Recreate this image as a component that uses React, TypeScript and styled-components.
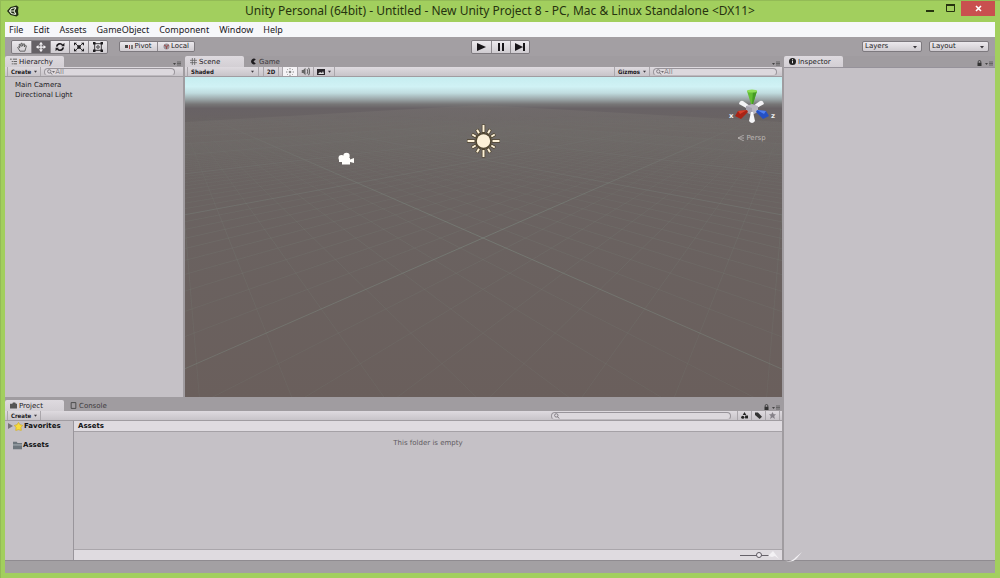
import React from "react";
import styled, { createGlobalStyle } from "styled-components";

const ui = '"DejaVu Sans", Verdana, sans-serif';
const uiNarrow = '"DejaVu Sans Condensed", "DejaVu Sans", Verdana, sans-serif';
const sys = '"Noto Sans", "Segoe UI", sans-serif';

const Global = createGlobalStyle`
  * { box-sizing: border-box; }
  body { margin: 0; font-family: ${ui}; font-size: 7px; line-height: 10px; color: #1c1a1d; }
  button, select, input { font: inherit; color: inherit; margin: 0; padding: 0; border: 0; border-radius: 0; background: none; }
  h1, h2, p, ul { margin: 0; padding: 0; font: inherit; list-style: none; }
  svg { display: block; flex: none; }
`;

const Frame = styled.div`
  position: relative;
  min-height: 100vh;
  display: flex;
  flex-direction: column;
  background: #a2cf5e;
  border: solid #93bb56;
  border-width: 1px 0 0 1px;
  padding: 0 5px 5px 4px;
`;
const TitleBar = styled.header`
  display: grid;
  grid-template-columns: 1fr auto 1fr;
  height: 21px;
  flex: none;
`;
const Logo = styled.div`
  padding: 4px 2px;
`;
const Title = styled.h1`
  font-family: ${sys};
  font-size: 12px;
  line-height: 20px;
  color: #26330f;
  white-space: nowrap;
`;
const WindowControls = styled.div`
  display: flex;
  justify-content: flex-end;
  align-items: flex-start;
`;
const WindowButton = styled.button<{ $close?: boolean }>`
  width: ${(p) => (p.$close ? "34px" : "20px")};
  height: ${(p) => (p.$close ? "15px" : "14px")};
  display: grid;
  place-items: center;
  background: ${(p) => (p.$close ? "#c9504f" : "transparent")};
`;
const MenuBar = styled.nav`
  display: flex;
  gap: 10px;
  height: 15px;
  flex: none;
  padding: 0 4px;
  background: #f6f7fa;
`;
const MenuItem = styled.button`
  font-family: ${sys};
  font-size: 9px;
  line-height: 14px;
`;
const MainToolbar = styled.div`
  display: grid;
  grid-template-columns: 1fr auto 1fr;
  align-items: center;
  height: 19px;
  flex: none;
  padding: 0 6px;
  background: #a39fa3;
`;
const ToolGroups = styled.div<{ $end?: boolean }>`
  display: flex;
  align-items: center;
  gap: ${(p) => (p.$end ? "7px" : "11px")};
  justify-content: ${(p) => (p.$end ? "flex-end" : "flex-start")};
`;
const ButtonGroup = styled.div`
  display: flex;
  border: 1px solid #7d797e;
  border-radius: 2px;
  overflow: hidden;
`;
const ToolButton = styled.button<{ $active?: boolean; $wide?: boolean }>`
  width: ${(p) => (p.$wide ? "37px" : "19px")};
  height: ${(p) => (p.$wide ? "9px" : "12px")};
  display: flex;
  align-items: center;
  justify-content: center;
  gap: 1px;
  line-height: 9px;
  background: ${(p) => (p.$active ? "#656166" : "linear-gradient(#ece9ed, #cfcbd0)")};
  & + & { border-left: 1px solid #8d898e; }
`;
const SelectBox = styled.label<{ $flat?: boolean }>`
  display: flex;
  align-items: center;
  width: ${(p) => (p.$flat ? "72px" : "60px")};
  height: ${(p) => (p.$flat ? "9px" : "11px")};
  padding: 0 4px 0 ${(p) => (p.$flat ? "3px" : "2px")};
  border: solid #7d797e;
  border-width: ${(p) => (p.$flat ? "0 1px" : "1px")};
  border-color: ${(p) => (p.$flat ? "#aaa6ab" : "#7d797e")};
  border-radius: ${(p) => (p.$flat ? "0" : "2px")};
  background: ${(p) => (p.$flat ? "none" : "linear-gradient(#ece9ed, #cfcbd0)")};
  select {
    appearance: none;
    flex: 1;
    min-width: 0;
    height: 9px;
    line-height: 9px;
    font-family: ${(p) => (p.$flat ? uiNarrow : ui)};
    font-size: ${(p) => (p.$flat ? "6px" : "7px")};
    font-weight: ${(p) => (p.$flat ? 700 : 400)};
  }
`;
const Workspace = styled.main`
  flex: 1;
  display: flex;
  gap: 2px;
  background: #a09ca0;
`;
const EditorColumn = styled.div`
  flex: 1;
  min-width: 0;
  display: flex;
  flex-direction: column;
  gap: 3px;
`;
const UpperRow = styled.div`
  flex: 1;
  display: flex;
  gap: 2px;
`;
const Panel = styled.section<{ $width?: string; $height?: string }>`
  display: flex;
  flex-direction: column;
  min-width: 0;
  flex: ${(p) => (p.$width ? `0 0 ${p.$width}` : p.$height ? `0 0 ${p.$height}` : "1")};
`;
const TabStrip = styled.div`
  display: flex;
  align-items: flex-end;
  gap: 1px;
  height: 11px;
  flex: none;
`;
const Tab = styled.button<{ $active?: boolean }>`
  display: flex;
  align-items: center;
  gap: 2px;
  width: 59px;
  height: 11px;
  padding: 0 5px;
  color: ${(p) => (p.$active ? "#1c1a1d" : "#3d3a3e")};
  background: ${(p) => (p.$active ? "linear-gradient(#dedadf, #d3cfd4)" : "none")};
  border-radius: 2px 2px 0 0;
`;
const TabTools = styled.div`
  margin-left: auto;
  display: flex;
  align-items: center;
  gap: 3px;
  padding: 0 2px 1px;
`;
const PanelBar = styled.div`
  display: flex;
  align-items: center;
  height: 10px;
  flex: none;
  padding: 0 2px;
  background: linear-gradient(#dedadf, #c8c4c9);
  border-bottom: 1px solid #a09ca1;
`;
const BarButton = styled.button<{ $on?: boolean; $label?: boolean }>`
  display: flex;
  align-items: center;
  justify-content: center;
  gap: 3px;
  min-width: ${(p) => (p.$label ? "32px" : "13px")};
  height: 9px;
  padding: 0 3px;
  font-family: ${uiNarrow};
  font-size: 6px;
  line-height: 9px;
  font-weight: 700;
  background: ${(p) => (p.$on ? "#f5f3f6" : "none")};
  border: solid #aaa6ab;
  border-width: 0 1px;
  & + & { border-left: 0; }
`;
const Spacer = styled.div<{ $w?: string }>`
  flex: ${(p) => (p.$w ? `0 0 ${p.$w}` : "1")};
`;
const Search = styled.label<{ $width?: string }>`
  display: flex;
  align-items: center;
  flex: ${(p) => (p.$width ? `0 0 ${p.$width}` : "1")};
  height: 8px;
  margin: 0 3px;
  padding: 0 2px;
  border: 1px solid #98949a;
  border-bottom-color: #bdb9be;
  border-radius: 4px;
  background: #dcd8dd;
  input { flex: 1; min-width: 0; width: 0; height: 6px; line-height: 6px; outline: 0; }
  input::placeholder { color: #868288; opacity: 1; }
`;
const PanelBody = styled.div<{ $line?: boolean }>`
  flex: 1;
  background: #c5c1c6;
  border-top: ${(p) => (p.$line ? "1px solid #96929a" : "0")};
`;
const ObjectList = styled.ul`
  padding: 3px 10px;
`;
const Viewport = styled.div`
  flex: 1;
  position: relative;
  overflow: hidden;
  background: #6a625f;
`;
const SceneCanvas = styled.svg`
  position: absolute;
  inset: 0;
  width: 100%;
  height: 100%;
`;
const AxisGizmo = styled.div`
  position: absolute;
  top: 7px;
  right: 3px;
  width: 54px;
  display: flex;
  flex-direction: column;
  align-items: center;
  gap: 7px;
`;
const PerspButton = styled.button`
  display: flex;
  align-items: center;
  gap: 2px;
  color: #bdb8b6;
`;
const ProjectBody = styled.div`
  flex: 1;
  display: flex;
  background: #c5c1c6;
`;
const ProjectTree = styled.ul`
  width: 69px;
  flex: none;
  border-right: 1px solid #99959b;
  display: flex;
  flex-direction: column;
  gap: 9px;
`;
const TreeItem = styled.li`
  display: flex;
  align-items: center;
  gap: 1px;
  height: 10px;
  padding-left: 3px;
  font-weight: 700;
  color: #111;
`;
const FolderView = styled.div`
  flex: 1;
  display: flex;
  flex-direction: column;
`;
const Breadcrumb = styled.h2`
  height: 11px;
  padding: 0 4px;
  font-weight: 700;
  color: #111;
  background: #dfdbe0;
  border-bottom: 1px solid #a5a1a6;
`;
const EmptyNote = styled.p`
  flex: 1;
  padding: 6px;
  text-align: center;
  color: #5f5b61;
`;
const FolderFooter = styled.div`
  display: flex;
  align-items: center;
  justify-content: flex-end;
  height: 11px;
  padding: 0 8px;
  background: #dfdbe0;
  border-top: 1px solid #aaa6ab;
`;
const ZoomSlider = styled.input`
  appearance: none;
  width: 34px;
  height: 8px;
  background: linear-gradient(#66626a, #66626a) center / 100% 1px no-repeat;
  &::-webkit-slider-thumb {
    appearance: none;
    width: 6px;
    height: 6px;
    border: 1px solid #5c5860;
    border-radius: 50%;
    background: #eeeaf0;
  }
`;
const StatusBar = styled.footer`
  height: 13px;
  flex: none;
  background: #a3a0a3;
  border-top: 1px solid #8f8b90;
`;
const Swoosh = styled.svg`
  position: absolute;
  right: 196px;
  bottom: 14px;
  pointer-events: none;
`;

const Caret = ({ size = 4 }: { size?: number }) => (
  <svg width={size} height={size} viewBox="0 0 4 4"><path d="M0 1h4L2 3.5z" fill="#39363b" /></svg>
);
const PanelMenu = () => (
  <svg width="8" height="5" viewBox="0 0 8 5"><path d="M0 2h3L1.500 4z" fill="#444" /><path d="M4 1h4M4 2.500h4M4 4h4" stroke="#555" strokeWidth=".8" /></svg>
);
const Lock = () => (
  <svg width="5" height="6" viewBox="0 0 5 6"><path d="M1.200 3V1.800a1.300 1.300 0 0 1 2.600 0V3" fill="none" stroke="#333" strokeWidth=".8" /><path d="M.5 2.800h4V6h-4z" fill="#333" /></svg>
);
const Lens = ({ menu }: { menu?: boolean }) => (
  <svg width="8" height="6" viewBox="0 0 8 6"><circle cx="2.300" cy="2.400" r="1.700" fill="none" stroke="#706c72" strokeWidth=".8" /><path d="M3.500 3.700l1.600 1.800" stroke="#706c72" />{menu && <path d="M5 2h3L6.500 4z" fill="#706c72" />}</svg>
);
const Icon = ({ children, size = 8 }: { children: React.ReactNode; size?: number }) => (
  <svg width={size} height={size} viewBox="0 0 12 12" fill="none" stroke="#1d1b1e" strokeWidth="1.500">{children}</svg>
);

/* Ground plane seen from a camera pitched 26 degrees and yawed 45 degrees, looking at the origin. */
const F = 277, SIN = 0.4384, COS = 0.8988, H = 4.05, D0 = 8.3, CX = 298, CY = 161;
type Pt = [number, number];
const project = (a: number, b: number): Pt => {
  const d = D0 + (a + b) * 0.7071, l = (a - b) * 0.7071;
  const z = d * COS + H * SIN;
  return [CX + (F * l) / z, CY + (F * (H * COS - d * SIN)) / z];
};
const NEAR = -(D0 * COS + H * SIN - 1) / (0.7071 * COS);
const FAR = 160;
const gridPath = (lines: number[]) =>
  lines.map((k) => {
    const start = Math.max(NEAR - k, -FAR);
    return [[project(k, start), project(k, FAR)], [project(start, k), project(FAR, k)]]
      .map(([p, q]) => `M${p[0].toFixed(1)} ${p[1].toFixed(1)}L${q[0].toFixed(1)} ${q[1].toFixed(1)}`)
      .join("");
  }).join("");
const range = (limit: number, step: number) =>
  Array.from({ length: (2 * limit) / step + 1 }, (_, i) => i * step - limit);
const minor = gridPath(range(40, 1).filter((k) => k % 10 !== 0));
const major = gridPath(range(150, 10).filter((k) => k !== 0));
const axes = gridPath([0]);
const rays = range(150, 30).concat(180);

const Scene = () => (
  <SceneCanvas viewBox="0 0 597 320" preserveAspectRatio="xMidYMid slice" aria-label="Scene">
    <defs>
      <linearGradient id="sky" x1="0" y1="0" x2="0" y2="320" gradientUnits="userSpaceOnUse">
        <stop offset="0" stopColor="#c6edf0" />
        <stop offset=".03" stopColor="#d0f2f5" />
        <stop offset=".05" stopColor="#c0dcdf" />
        <stop offset=".07" stopColor="#9aa5a7" />
        <stop offset=".085" stopColor="#777677" />
        <stop offset=".098" stopColor="#686265" />
        <stop offset=".15" stopColor="#6a6463" />
        <stop offset="1" stopColor="#6a5f5c" />
      </linearGradient>
      <linearGradient id="fade" x1="0" y1="0" x2="0" y2="320" gradientUnits="userSpaceOnUse">
        <stop offset=".12" stopColor="#000" />
        <stop offset=".2" stopColor="#555" />
        <stop offset=".4" stopColor="#ddd" />
        <stop offset=".5" stopColor="#fff" />
        <stop offset="1" stopColor="#aaa" />
      </linearGradient>
      <linearGradient id="haze" x1="0" y1="28" x2="0" y2="110" gradientUnits="userSpaceOnUse">
        <stop offset="0" stopColor="#7b7774" stopOpacity=".4" />
        <stop offset="1" stopColor="#74706c" stopOpacity="0" />
      </linearGradient>
      <mask id="far"><rect width="597" height="320" fill="url(#fade)" /></mask>
    </defs>
    <rect width="597" height="320" fill="url(#sky)" />
    <path d="M0 45L298 28L597 45V110H0z" fill="url(#haze)" />
    <g mask="url(#far)" fill="none">
      <path d={minor} stroke="#788078" strokeOpacity=".24" />
      <path d={major} stroke="#7d8a82" strokeOpacity=".4" />
      <path d={axes} stroke="#7d8a82" strokeOpacity=".55" />
    </g>
    <g fill="#fffefb"><circle cx="156.500" cy="81" r="3" /><circle cx="161.500" cy="79" r="3.200" /><path d="M154 81h11v1.500l4-1.500v5l-4-1v2.500h-8v-2.500h-3z" /></g>
    <g transform="translate(298.500 64)">
      <g stroke="#50452f" strokeWidth="3.500">
        {rays.map((a) => <path key={a} d={a % 90 ? "M0-8V-13.500" : "M0-8V-16.500"} transform={`rotate(${a})`} />)}
      </g>
      <circle r="8" fill="#50452f" />
      <circle r="6.700" fill="#fdf1d8" />
      <g stroke="#fdf1d8" strokeWidth="2">
        {rays.map((a) => <path key={a} d={a % 90 ? "M0-9V-13" : "M0-9V-16"} transform={`rotate(${a})`} />)}
      </g>
    </g>
  </SceneCanvas>
);

const Gizmo = () => (
  <svg width="48" height="42" viewBox="0 0 48 42">
    <path d="M11 20q1-4 4-3l7 5-2 3z" fill="#f3f3f6" /><path d="M36 20q-1-4-4-3l-7 5 2 3z" fill="#f3f3f6" />
    <path d="M18 22l6-2 6 2v6l-6 3-6-3z" fill="#b9b6c1" /><path d="M18 22l6 2v7l-6-3z" fill="#a5a2af" />
    <path d="M19 7h10l-4 13h-2z" fill="#62bd33" /><path d="M25 7h4l-4 13h-1z" fill="#459a25" /><ellipse cx="24" cy="7" rx="5" ry="1.500" fill="#8ede58" />
    <path d="M7 32l3-5 9-1 1 2-7 7z" fill="#a82416" /><path d="M10 27l9-1-7 4z" fill="#d8402c" />
    <path d="M41 32l-3-5-9-1-1 2 7 7z" fill="#2450c4" /><path d="M38 27l-9-1 7 4z" fill="#4f80f2" />
    <path d="M23 28h2l2 9q-3 4-6 0z" fill="#f6f6f8" />
    <g fill="#eee" fontSize="7" fontWeight="700"><text x="1" y="34">x</text><text x="43" y="34">z</text></g>
  </svg>
);

const App = () => (
  <>
    <Global />
    <Frame>
      <TitleBar>
        <Logo>
          <svg width="12" height="12" viewBox="0 0 24 24"><path d="M0 12L7 4l12-3 4 3-1 8 1 8-4 3-12-3z" fill="#1f2a14" /><path d="M17 5L9 7l-4 5 4 5 8 2M5 12h9M14 12l4-7M14 12l4 7" fill="none" stroke="#e9f2dc" strokeWidth="2.200" /></svg>
        </Logo>
        <Title>Unity Personal (64bit) - Untitled - New Unity Project 8 - PC, Mac &amp; Linux Standalone &lt;DX11&gt;</Title>
        <WindowControls>
          <WindowButton aria-label="Minimize"><svg width="10" height="10"><path d="M0 8h8" stroke="#26330f" strokeWidth="2" /></svg></WindowButton>
          <WindowButton aria-label="Maximize"><svg width="10" height="8"><path d="M.5 1v6.500h8V1" fill="none" stroke="#26330f" /><path d="M0 1h9" stroke="#26330f" strokeWidth="2" /></svg></WindowButton>
          <WindowButton $close aria-label="Close"><svg width="7" height="7"><path d="M1 1l5 5M6 1L1 6" stroke="#fff" strokeWidth="1.600" /></svg></WindowButton>
        </WindowControls>
      </TitleBar>
      <MenuBar>
        {["File", "Edit", "Assets", "GameObject", "Component", "Window", "Help"].map((m) => <MenuItem key={m}>{m}</MenuItem>)}
      </MenuBar>
      <MainToolbar>
        <ToolGroups>
          <ButtonGroup>
            <ToolButton aria-label="Hand"><Icon size={10}><path d="M3.500 11L.8 6.500 2 5.800 3.300 7 2.500 3l1.200-.4L5 5.500 4.800 1.500h1.400L6.800 5l1.200-3 1.200.4L8.800 6l1.500-2 1 .6L9.500 11z" strokeWidth=".9" stroke="#444" /></Icon></ToolButton>
            <ToolButton $active aria-label="Move"><Icon size={10}><path d="M6 1v10M1 6h10" stroke="#f2f0f3" /><path d="M6 0l2.500 3h-5zM6 12l2.500-3h-5zM0 6l3-2.500v5zM12 6L9 3.500v5z" fill="#f2f0f3" stroke="none" /></Icon></ToolButton>
            <ToolButton aria-label="Rotate"><Icon size={10}><path d="M2 5.500A4 4 0 0 1 9 3.500M10 6.500A4 4 0 0 1 3 8.500" strokeWidth="2" /><path d="M7.500 5h3.800V1zM4.500 7H.7v4z" fill="#1d1b1e" stroke="none" /></Icon></ToolButton>
            <ToolButton aria-label="Scale"><Icon size={10}><path d="M1 1l10 10M11 1L1 11" strokeWidth="1" /><path d="M0 1h3.500L0 4.500zM12 1v3.500L8.500 1zM0 11V7.500L3.500 11zM12 11H8.500L12 7.500zM4 4h4v4H4z" fill="#1d1b1e" stroke="none" /></Icon></ToolButton>
            <ToolButton aria-label="Rect"><Icon size={10}><path d="M2 2h8v8H2z" strokeWidth="1" /><circle cx="6" cy="6" r="1.500" strokeWidth="1" /><path d="M0 0h3v3H0zM9 0h3v3H9zM0 9h3v3H0zM9 9h3v3H9z" fill="#1d1b1e" stroke="none" /></Icon></ToolButton>
          </ButtonGroup>
          <ButtonGroup>
            <ToolButton $wide><svg width="8" height="6"><path d="M0 1h3v3H0z" fill="#444" /><path d="M4 1h1v4H4z" fill="#b04848" /><path d="M6 1h2v4H6z" fill="#777" /></svg>Pivot</ToolButton>
            <ToolButton $wide><svg width="7" height="7" viewBox="0 0 7 7"><circle cx="3.500" cy="3.500" r="3" fill="#989298" /><path d="M1 2l2.500 1.500L6 2M3.500 3.500V6" stroke="#a04a4a" fill="none" /></svg>Local</ToolButton>
          </ButtonGroup>
        </ToolGroups>
        <ButtonGroup>
          <ToolButton aria-label="Play"><svg width="9" height="8"><path d="M0 0l9 4-9 4z" fill="#171518" /></svg></ToolButton>
          <ToolButton aria-label="Pause"><svg width="6" height="8"><path d="M0 0h2v8H0zM4 0h2v8H4z" fill="#171518" /></svg></ToolButton>
          <ToolButton aria-label="Step"><svg width="10" height="8"><path d="M0 0l8 4-8 4zM8 0h2v8H8z" fill="#171518" /></svg></ToolButton>
        </ButtonGroup>
        <ToolGroups $end>
          <SelectBox><select aria-label="Layers"><option>Layers</option></select><Caret /></SelectBox>
          <SelectBox><select aria-label="Layout"><option>Layout</option></select><Caret /></SelectBox>
        </ToolGroups>
      </MainToolbar>
      <Workspace>
        <EditorColumn>
          <UpperRow>
            <Panel $width="178px">
              <TabStrip>
                <Tab $active><Icon size={7}><path d="M0 2h3M5 2h7M3 6h2M6 6h6M3 10h2M6 10h6" stroke="#555" /></Icon>Hierarchy</Tab>
                <TabTools><PanelMenu /></TabTools>
              </TabStrip>
              <PanelBar>
                <BarButton $label>Create<Caret size={3} /></BarButton>
                <Search><Lens menu /><input placeholder="All" aria-label="Search hierarchy" /></Search>
                <Spacer $w="3px" />
              </PanelBar>
              <PanelBody>
                <ObjectList><li>Main Camera</li><li>Directional Light</li></ObjectList>
              </PanelBody>
            </Panel>
            <Panel>
              <TabStrip>
                <Tab $active><Icon size={7}><path d="M4 0v12M8 0v12M0 4h12M0 8h12" stroke="#555" strokeWidth="1.200" /></Icon>Scene</Tab>
                <Tab><Icon size={7}><path d="M10 2A5 5 0 1 0 10 10L6 6z" fill="#1d1b1e" stroke="none" /></Icon>Game</Tab>
                <TabTools><PanelMenu /></TabTools>
              </TabStrip>
              <PanelBar>
                <SelectBox $flat><select aria-label="Draw mode"><option>Shaded</option></select><Caret size={3} /></SelectBox>
                <Spacer $w="4px" />
                <BarButton>2D</BarButton>
                <Spacer $w="3px" />
                <BarButton $on aria-label="Lighting"><Icon size={8}><circle cx="6" cy="6" r="2" fill="#888" stroke="none" /><path d="M6 0v2M6 10v2M0 6h2M10 6h2M2 2l1 1M9 9l1 1M10 2L9 3M3 9l-1 1" stroke="#888" /></Icon></BarButton>
                <BarButton aria-label="Audio"><Icon size={9}><path d="M1 4h2l3-3v10L3 8H1z" fill="#666" stroke="none" /><path d="M8 3q2 3 0 6M10 1q3 5 0 10" stroke="#666" /></Icon></BarButton>
                <BarButton aria-label="Effects"><svg width="8" height="6"><path d="M0 0h8v6H0z" fill="#29262b" /><path d="M1 5l2-2 2 1 1-2 1 3z" fill="#ddd" /></svg><Caret size={3} /></BarButton>
                <Spacer />
                <BarButton $label>Gizmos<Caret size={3} /></BarButton>
                <Search $width="124px"><Lens menu /><input placeholder="All" aria-label="Search scene" /></Search>
              </PanelBar>
              <Viewport>
                <Scene />
                <AxisGizmo>
                  <Gizmo />
                  <PerspButton><svg width="6" height="6"><path d="M6 0L0 3l6 3M0 3h6" fill="none" stroke="#bdb8b6" strokeWidth=".8" /></svg>Persp</PerspButton>
                </AxisGizmo>
              </Viewport>
            </Panel>
          </UpperRow>
          <Panel $height="160px">
            <TabStrip>
              <Tab $active><Icon size={7}><path d="M0 3h4l1-2h4l1 2h2v8H0z" fill="#555" stroke="none" /></Icon>Project</Tab>
              <Tab><Icon size={7}><path d="M2 1h8v10H2z" stroke="#444" /></Icon>Console</Tab>
              <TabTools><Lock /><PanelMenu /></TabTools>
            </TabStrip>
            <PanelBar>
              <BarButton $label>Create<Caret size={3} /></BarButton>
              <Spacer />
              <Search $width="180px"><Lens /><input aria-label="Search project" /></Search>
              <Spacer $w="3px" />
              <BarButton aria-label="Filter by type"><Icon size={7}><path d="M6 0l3 5H3z" fill="#222" stroke="none" /><circle cx="3" cy="9" r="2.700" fill="#222" stroke="none" /><path d="M7 6h5v5H7z" fill="#222" stroke="none" /></Icon></BarButton>
              <BarButton aria-label="Filter by label"><Icon size={7}><path d="M0 1l5 0 7 7-4 4-8-7z" fill="#333" stroke="none" /></Icon></BarButton>
              <BarButton aria-label="Save search"><Icon size={7}><path d="M6 0l2 4h4L9 7l1 5-4-3-4 3 1-5-3-3h4z" fill="#858188" stroke="none" /></Icon></BarButton>
            </PanelBar>
            <ProjectBody>
              <ProjectTree>
                <TreeItem><svg width="5" height="6"><path d="M0 0l5 3-5 3z" fill="#77737a" /></svg><Icon size={9}><path d="M6 .5l2 3.200 3.500.8-2.300 2.900.5 3.800L6 10.200l-3.700 1 .5-3.800L.5 4.500 4 3.700z" fill="#f7dc3c" stroke="#d2ad28" strokeWidth="1" /></Icon>Favorites</TreeItem>
                <TreeItem><Spacer $w="4px" /><Icon size={9}><path d="M0 1h5l1 1.500h6V11H0z" fill="#6d757c" stroke="none" /><path d="M0 4.500h12v1.500H0z" fill="#a4acb2" stroke="none" /></Icon>Assets</TreeItem>
              </ProjectTree>
              <FolderView>
                <Breadcrumb>Assets</Breadcrumb>
                <EmptyNote>This folder is empty</EmptyNote>
                <FolderFooter><ZoomSlider type="range" min="0" max="100" defaultValue="56" aria-label="Icon size" /></FolderFooter>
              </FolderView>
            </ProjectBody>
          </Panel>
        </EditorColumn>
        <Panel $width="211px">
          <TabStrip>
            <Tab $active><Icon size={7}><circle cx="6" cy="6" r="6" fill="#222" stroke="none" /><path d="M6 5v4M6 2v2" stroke="#fff" /></Icon>Inspector</Tab>
            <TabTools><Lock /><PanelMenu /></TabTools>
          </TabStrip>
          <PanelBody $line />
        </Panel>
      </Workspace>
      <StatusBar />
      <Swoosh width="36" height="14" viewBox="0 0 36 14">
        <path d="M0 6l5-5 6 8-4-3-3 1z" fill="#f3f1f4" />
        <path d="M16 10q7 3 12-3l6-5-5 6q-5 6-13 2z" fill="#f3f1f4" />
      </Swoosh>
    </Frame>
  </>
);

export default App;
